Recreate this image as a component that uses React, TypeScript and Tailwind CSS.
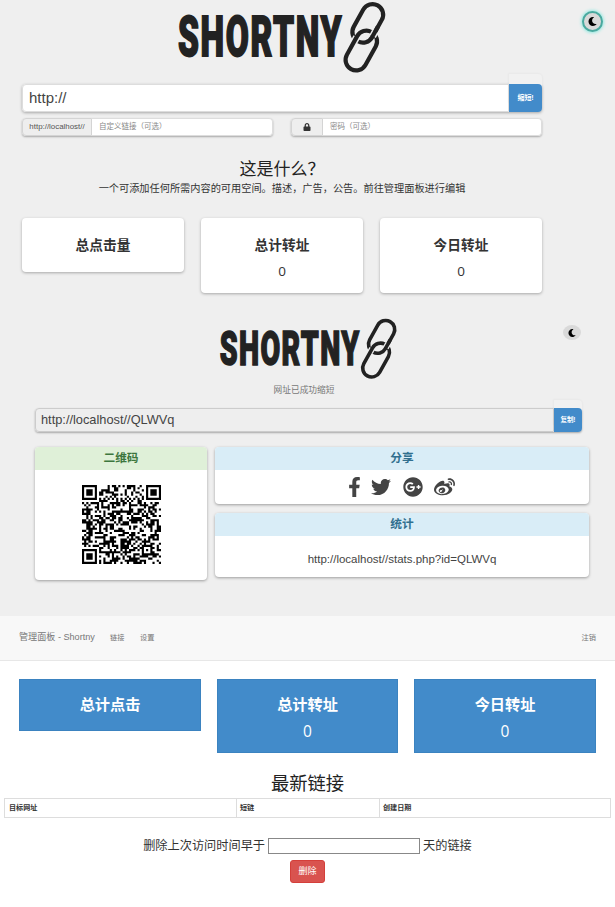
import React from "react";
import { FaFacebookF, FaGooglePlus, FaLock, FaMoon, FaTwitter, FaWeibo } from "react-icons/fa";

function Logo({ className }: { className: string }) {
  return (
    <svg viewBox="0 0 210 74" preserveAspectRatio="none" className={`overflow-visible ${className}`} fill="none">
      <text
        x="1"
        y="56"
        textLength="165"
        lengthAdjust="spacingAndGlyphs"
        fontFamily="Roboto, sans-serif"
        fontWeight="900"
        fontSize="56"
        letterSpacing="2.6"
        fill="#222"
        stroke="#222"
        strokeWidth="1.8"
      >
        SHORTNY
      </text>
      <g strokeLinecap="butt">
        <rect x="-10.6" y="-20" width="21.2" height="41" rx="10.6" transform="translate(191 22.9) rotate(29)" stroke="#222" strokeWidth="4.2" />
        <path d="M179.7 37L177.1 41.7" stroke="#efefef" strokeWidth="7.2" />
        <rect x="-10.6" y="-20.8" width="21.2" height="42.4" rx="10.6" transform="translate(184.5 50.2) rotate(29)" stroke="#222" strokeWidth="4.2" />
        <path d="M195.7 36.2L198.3 31.5" stroke="#efefef" strokeWidth="7.2" />
        <path d="M201 26.6L195.2 37.1" stroke="#222" strokeWidth="4.2" />
      </g>
    </svg>
  );
}

const SIZE = 37;

function buildModules(): string {
  let seed = 20713;
  let d = "";
  const inBox = (x: number, y: number, bx: number, by: number, s: number) =>
    x >= bx && y >= by && x < bx + s && y < by + s;
  for (let y = 0; y < SIZE; y++) {
    for (let x = 0; x < SIZE; x++) {
      seed = (seed * 1103515245 + 12345) % 2147483648;
      let on = seed / 2147483648 > 0.48;
      if (x === 6 || y === 6) on = (x + y) % 2 === 0;
      const corners = [[0, 0], [SIZE - 7, 0], [0, SIZE - 7]];
      for (const [cx, cy] of corners) {
        if (inBox(x, y, cx - 1, cy - 1, 9)) {
          const r = Math.max(Math.abs(x - cx - 3), Math.abs(y - cy - 3));
          on = r === 3 || r <= 1;
        }
      }
      if (inBox(x, y, SIZE - 9, SIZE - 9, 5)) {
        const r = Math.max(Math.abs(x - SIZE + 7), Math.abs(y - SIZE + 7));
        on = r !== 1;
      }
      if (on) d += `M${x} ${y}h1v1h-1z`;
    }
  }
  return d;
}

const modules = buildModules();

function Card({ title, value, className }: { title: string; value?: string; className: string }) {
  return (
    <div className={`flex flex-col items-center rounded bg-white text-[#333] shadow-[0_1px_3px_rgba(0,0,0,0.3)] ${className}`}>
      <div className="mt-[18px] text-[13.7px] leading-5 font-bold">{title}</div>
      {value && <div className="mt-[5px] font-['Open_Sans'] text-[13.5px] leading-5">{value}</div>}
    </div>
  );
}

function Tile({ title, value, className }: { title: string; value?: string; className: string }) {
  return (
    <div className={`flex flex-col items-center border border-[#3b83c0] bg-[#428bca] text-white ${className}`}>
      <div className="mt-[13px] text-[15.2px] leading-6 font-bold">{title}</div>
      {value && <div className="mt-[2px] font-['Open_Sans'] text-[15.5px] leading-6">{value}</div>}
    </div>
  );
}

function HomePanel() {
  return (
    <section className="h-[312px]">
      <div className="flex h-[84px]">
        <Logo className="ml-[177px] h-[74px] w-[210px]" />
        <div className="mt-[11px] ml-[195px] flex h-[21px] w-[21px] items-center justify-center rounded-full border-2 border-[#4aa99f] bg-[#d9d9d9] shadow-[0_0_3px_1px_#9eeae3]">
          <FaMoon className="h-[9px] w-[9px] text-black" />
        </div>
      </div>
      <div className="ml-[22px] w-[520px]">
        <div className="flex h-7 rounded shadow-[0_1px_3px_rgba(0,0,0,0.3)]">
          <div className="flex flex-1 items-center rounded-l border border-[#ddd] bg-white pl-[6px] text-[15px] text-[#444]">http://</div>
          <div className="flex w-[33px] items-center justify-center rounded-r bg-[#428bca] text-[7px] font-bold tracking-[-0.1px] text-white shadow-[0_-10px_0_0_#f1f1f1,0_-10px_2px_1px_rgba(0,0,0,0.03)]">
            缩短!
          </div>
        </div>
        <div className="mt-[6px] flex gap-[18px] text-[7.5px]">
          <div className="flex h-[18px] w-[251px] rounded shadow-[0_1px_2px_rgba(0,0,0,0.3)]">
            <div className="flex w-[70px] items-center justify-center rounded-l border border-[#d4d4d4] bg-[#eee] text-[7.9px] text-[#555]">http://localhost//</div>
            <div className="flex flex-1 items-center rounded-r border border-l-0 border-[#ddd] bg-white pl-[7px] text-[#888]">自定义链接（可选）</div>
          </div>
          <div className="flex h-[18px] w-[251px] rounded shadow-[0_1px_2px_rgba(0,0,0,0.3)]">
            <div className="flex w-[32px] items-center justify-center rounded-l border border-[#d4d4d4] bg-[#eee] text-[#333]">
              <FaLock className="h-2 w-2" />
            </div>
            <div className="flex flex-1 items-center rounded-r border border-l-0 border-[#ddd] bg-white pl-[7px] text-[#888]">密码（可选）</div>
          </div>
        </div>
        <h2 className="mt-[22px] text-center text-[17px] leading-6 text-[#222]">这是什么？</h2>
        <p className="text-center text-[10.2px] leading-[14px] whitespace-nowrap text-[#333]">
          一个可添加任何所需内容的可用空间。描述，广告，公告。前往管理面板进行编辑
        </p>
        <div className="mt-[22px] flex items-start gap-[17px]">
          <Card title="总点击量" className="h-[54px] w-[162px]" />
          <Card title="总计转址" value="0" className="h-[75px] w-[162px]" />
          <Card title="今日转址" value="0" className="h-[75px] w-[162px]" />
        </div>
      </div>
    </section>
  );
}

function ResultPanel() {
  return (
    <section className="h-[304px]">
      <div className="flex h-[72px] pt-[5px]">
        <Logo className="ml-[219px] h-[63px] w-[179px]" />
        <div className="mt-[8px] ml-[165px] flex h-[15px] w-[18px] items-center justify-center rounded-[50%] bg-[#d9d9d9]">
          <FaMoon className="h-2 w-2 text-black" />
        </div>
      </div>
      <p className="h-6 pr-[7px] text-center text-[8.7px] leading-[12px] text-[#777]">网址已成功缩短</p>
      <div className="ml-[35px] flex h-6 w-[547px] rounded shadow-[0_1px_2px_rgba(0,0,0,0.3)]">
        <div className="flex flex-1 items-center rounded-l border border-[#ccc] bg-[#eee] pl-[5px] text-[12.8px] text-[#444]">http://localhost//QLWVq</div>
        <div className="flex w-7 items-center justify-center rounded-r bg-[#428bca] text-[6.5px] font-bold tracking-[-0.1px] text-white shadow-[0_-8px_0_0_#f1f1f1,0_-8px_2px_1px_rgba(0,0,0,0.03)]">
          复制!
        </div>
      </div>
      <div className="mt-[15px] ml-[35px] flex items-start gap-2 text-[11.7px]">
        <div className="h-[133px] w-[172px] rounded bg-white shadow-[0_1px_3px_rgba(0,0,0,0.35)]">
          <div className="h-[23px] rounded-t bg-[#dff0d8] text-center leading-[21px] font-bold text-[#3c763d]">二维码</div>
          <svg viewBox="0 0 37 37" className="mt-[15px] ml-[47px] h-[79px] w-[79px]">
            <path d={modules} fill="#000" />
          </svg>
        </div>
        <div className="flex w-[374px] flex-col gap-[9px]">
          <div className="h-[57px] rounded bg-white shadow-[0_1px_3px_rgba(0,0,0,0.35)]">
            <div className="h-[23px] rounded-t bg-[#d9edf7] text-center leading-[21px] font-bold text-[#31708f]">分享</div>
            <div className="flex h-[34px] items-center pl-[132px] text-[#444]">
              <FaFacebookF className="h-5 w-[15px]" />
              <FaTwitter className="ml-[9px] h-5 w-5" />
              <FaGooglePlus className="ml-[12px] h-5 w-5" />
              <FaWeibo className="ml-[11px] h-[21px] w-[21px]" />
            </div>
          </div>
          <div className="h-[64px] rounded bg-white shadow-[0_1px_3px_rgba(0,0,0,0.35)]">
            <div className="h-[23px] rounded-t bg-[#d9edf7] text-center leading-[21px] font-bold text-[#31708f]">统计</div>
            <div className="pt-[13px] text-center text-[11.5px] leading-5 text-[#444]">http://localhost//stats.php?id=QLWVq</div>
          </div>
        </div>
      </div>
    </section>
  );
}

function AdminPanel() {
  return (
    <section className="h-[291px] bg-white">
      <nav className="flex h-[45px] items-center border-b border-[#e7e7e7] bg-[#f8f8f8] pr-[19px] pl-[19px] text-[7.2px] text-[#777]">
        <span className="w-[91px] text-[9.1px]">管理面板 - Shortny</span>
        <span className="w-[30px]">链接</span>
        <span>设置</span>
        <span className="ml-auto">注销</span>
      </nav>
      <div className="mt-[18px] ml-[19px] flex h-[74px] items-start gap-4">
        <Tile title="总计点击" className="h-[52px] w-[182px]" />
        <Tile title="总计转址" value="0" className="h-[74px] w-[181px]" />
        <Tile title="今日转址" value="0" className="h-[74px] w-[182px]" />
      </div>
      <h2 className="mt-[18px] text-center text-[18.3px] leading-[26px] text-[#222]">最新链接</h2>
      <div className="mt-px ml-1 flex h-5 w-[607px] items-center border border-[#ddd] text-[7.1px] leading-[18px] font-bold text-[#333]">
        <div className="w-[232px] border-r border-[#ddd] pl-1">目标网址</div>
        <div className="w-[143px] border-r border-[#ddd] pl-[3px]">短链</div>
        <div className="pl-[3px]">创建日期</div>
      </div>
      <div className="mt-[20px] flex h-4 items-center justify-center gap-[3px] text-[12.2px] leading-4 text-[#333]">
        <span>删除上次访问时间早于</span>
        <span className="h-4 w-[152px] border border-[#888] bg-white" />
        <span>天的链接</span>
      </div>
      <div className="mt-[6px] flex justify-center">
        <div className="flex h-[23px] w-[35px] items-center justify-center rounded-[3px] border border-[#d43f3a] bg-[#d9534f] text-[9px] text-white">删除</div>
      </div>
    </section>
  );
}

export default function App() {
  return (
    <main className="h-[907px] w-[615px] overflow-hidden bg-[#efefef] font-['Liberation_Sans','Noto_Sans_CJK_SC',sans-serif]">
      <HomePanel />
      <ResultPanel />
      <AdminPanel />
    </main>
  );
}
